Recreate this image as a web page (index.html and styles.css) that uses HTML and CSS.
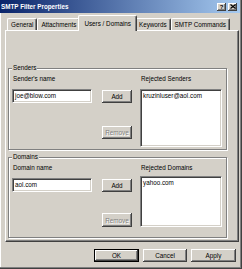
FILE: index.html
```html
<!DOCTYPE html>
<html lang="en">
<head>
    <meta charset="UTF-8">
    <title>SMTP Filter Properties</title>
    <link rel="stylesheet" href="styles.css">
</head>
<body>
    <div class="window">
        <div class="titlebar">
            <span class="title">SMTP Filter Properties</span>
            <div class="caption-btns">
                <span class="cap-btn">?</span>
                <span class="cap-btn">
                    <svg width="6" height="5" viewBox="0 0 6 5"><path d="M0.5 0.5 L5.5 4.5 M5.5 0.5 L0.5 4.5" stroke="#000" stroke-width="1.2"/></svg>
                </span>
            </div>
        </div>

        <div class="tabs">
            <div class="tab">General</div>
            <div class="tab">Attachments</div>
            <div class="tab active">Users / Domains</div>
            <div class="tab">Keywords</div>
            <div class="tab">SMTP Commands</div>
        </div>

        <div class="panel">
            <div class="group group-senders">
                <div class="group-title">Senders</div>
                <div class="group-body">
                    <div class="col-left">
                        <div class="label">Sender's name</div>
                        <div class="entry-row">
                            <div class="field">joe@blow.com</div>
                            <button class="btn btn-add">Add</button>
                        </div>
                        <button class="btn btn-remove" disabled>Remove</button>
                    </div>
                    <div class="col-right">
                        <div class="label">Rejected Senders</div>
                        <div class="listbox">kruzinluser@aol.com</div>
                    </div>
                </div>
            </div>

            <div class="group group-domains">
                <div class="group-title">Domains</div>
                <div class="group-body">
                    <div class="col-left">
                        <div class="label">Domain name</div>
                        <div class="entry-row">
                            <div class="field">aol.com</div>
                            <button class="btn btn-add">Add</button>
                        </div>
                        <button class="btn btn-remove" disabled>Remove</button>
                    </div>
                    <div class="col-right">
                        <div class="label">Rejected Domains</div>
                        <div class="listbox">yahoo.com</div>
                    </div>
                </div>
            </div>
        </div>

        <div class="footer">
            <button class="btn btn-default">OK</button>
            <button class="btn btn-cancel">Cancel</button>
            <button class="btn btn-apply">Apply</button>
        </div>
    </div>
</body>
</html>
```

FILE: styles.css
```css
* {
    box-sizing: border-box;
}

body {
    margin: 0;
    font-family: "Liberation Sans", Arial, sans-serif;
    font-size: 6.3px;
    color: #000;
    background: #d4d0c8;
}

.window {
    width: 242px;
    height: 269px;
    background: #d4d0c8;
    box-shadow: inset -1px -1px 0 #404040, inset -2px -2px 0 #808080, inset 1px 0 0 #fff;
    overflow: hidden;
}

/* title bar */
.titlebar {
    height: 13px;
    margin-right: 2px;
    padding: 0 3px 0 1px;
    display: flex;
    align-items: center;
    justify-content: space-between;
    background: linear-gradient(to right, #0a246a, #a6caf0);
}

.title {
    color: #fff;
    font-weight: bold;
    line-height: 13px;
}

.caption-btns {
    display: flex;
    gap: 2px;
}

.cap-btn {
    width: 9px;
    height: 8px;
    display: flex;
    align-items: center;
    justify-content: center;
    font-size: 6px;
    font-weight: bold;
    background: #d4d0c8;
    box-shadow: inset -1px -1px 0 #404040, inset 1px 1px 0 #fff, inset -2px -2px 0 #808080;
}

/* tabs */
.tabs {
    display: flex;
    align-items: flex-end;
    height: 17px;
    padding-left: 7px;
}

.tab {
    height: 12px;
    line-height: 11px;
    padding: 0 3px;
    border-top: 1px solid #fff;
    border-left: 1px solid #fff;
    border-right: 1px solid #404040;
    border-radius: 2px 2px 0 0;
    box-shadow: inset -1px 0 0 #808080;
    white-space: nowrap;
}

.tab.active {
    position: relative;
    z-index: 1;
    height: 16px;
    margin: 0 -2px -1px;
    padding: 4px 5px 0;
    line-height: 8px;
    background: #d4d0c8;
}

.panel {
    margin-left: 5px;
    width: 234px;
    height: 212px;
    padding: 37px 0 0 2px;
    border-top: 1px solid #fff;
    border-left: 1px solid #fff;
    border-right: 1px solid #404040;
    border-bottom: 1px solid #404040;
    box-shadow: inset -1px -1px 0 #808080;
}

/* group boxes */
.group {
    width: 219px;
    padding: 0 3px;
    border: 1px solid #808080;
    box-shadow: inset 1px 1px 0 #fff, 1px 1px 0 #fff;
}

.group-senders {
    height: 82px;
}

.group-domains {
    height: 81px;
    margin-top: 7px;
}

.group-title {
    width: fit-content;
    margin-top: -5px;
    padding: 0 1px;
    line-height: 8px;
    background: #d4d0c8;
}

.group-body {
    display: flex;
    gap: 8px;
    padding-top: 3px;
}

.col-left {
    width: 120px;
    display: flex;
    flex-direction: column;
}

.col-right {
    width: 82px;
}

.label {
    line-height: 8px;
    padding-left: 1px;
}

.entry-row {
    display: flex;
    align-items: flex-start;
    justify-content: space-between;
    margin-top: 6px;
}

.field,
.listbox {
    background: #fff;
    border-top: 1px solid #808080;
    border-left: 1px solid #808080;
    border-right: 1px solid #fff;
    border-bottom: 1px solid #fff;
    box-shadow: inset 1px 1px 0 #404040, inset -1px -1px 0 #d4d0c8;
}

.field {
    width: 80px;
    height: 14px;
    padding: 0 2px;
    line-height: 12px;
}

.listbox {
    height: 58px;
    margin-top: 6px;
    padding: 2px 2px;
    line-height: 8px;
}

.group-domains .listbox {
    height: 51px;
    margin-top: 4px;
}

/* buttons */
.btn {
    height: 13px;
    padding: 0;
    border: none;
    font: inherit;
    color: #000;
    background: #d4d0c8;
    box-shadow: inset -1px -1px 0 #404040, inset 1px 1px 0 #fff, inset -2px -2px 0 #808080;
}

.btn-add {
    width: 30px;
    margin-top: 1px;
}

.btn-remove {
    align-self: flex-end;
    width: 30px;
    margin-top: 23px;
    color: #808080;
    text-shadow: 1px 1px 0 #fff;
}

.group-domains .btn-remove {
    height: 14px;
    margin-top: 21px;
}

.footer {
    display: flex;
    justify-content: flex-end;
    gap: 4px;
    padding: 7px 6px 0 0;
}

.btn-default {
    width: 45px;
    border: 1px solid #000;
}

.btn-cancel {
    width: 44px;
}

.btn-apply {
    width: 45px;
}
```
